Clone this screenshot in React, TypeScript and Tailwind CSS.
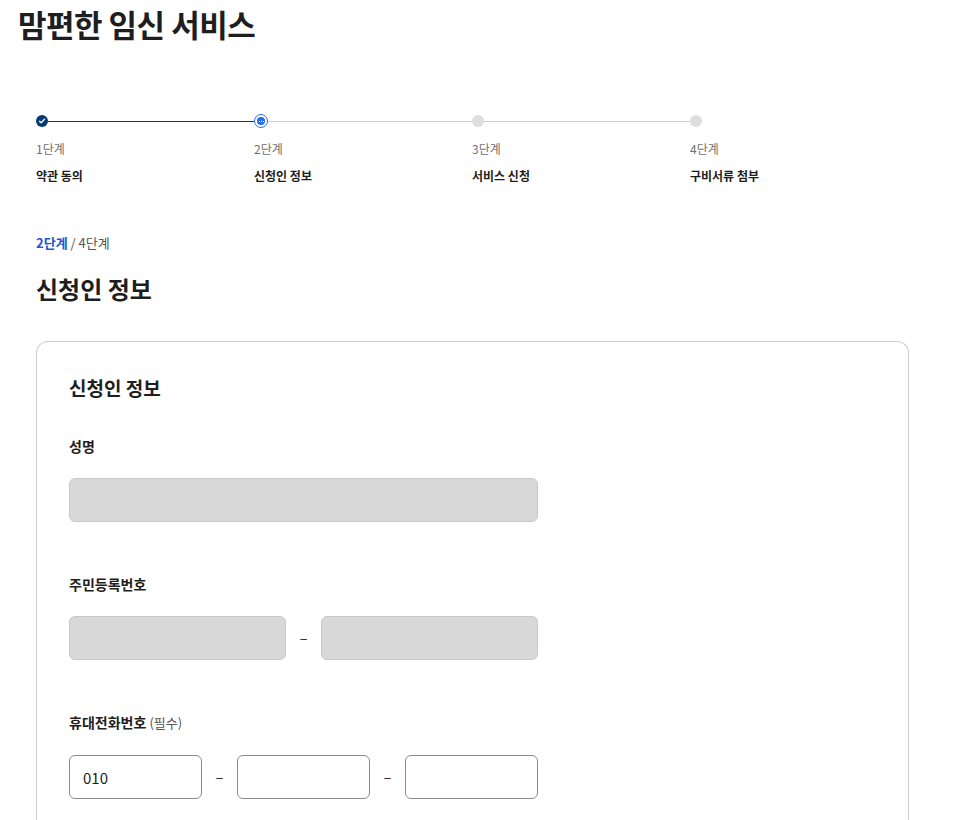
import React from "react";

interface Step {
  no: string;
  label: string;
  state: "done" | "current" | "todo";
}

const steps: Step[] = [
  { no: "1단계", label: "약관 동의", state: "done" },
  { no: "2단계", label: "신청인 정보", state: "current" },
  { no: "3단계", label: "서비스 신청", state: "todo" },
  { no: "4단계", label: "구비서류 첨부", state: "todo" },
];

const StepDot: React.FC<{ state: Step["state"] }> = ({ state }) => {
  if (state === "done") {
    return (
      <span className="flex h-[12px] w-[12px] shrink-0 items-center justify-center rounded-full bg-[#063a74]">
        <svg width="8" height="8" viewBox="0 0 8 8" fill="none">
          <path d="M1.5 4.2 3.2 5.8 6.5 2.3" stroke="white" strokeWidth="1.3" strokeLinecap="round" strokeLinejoin="round" />
        </svg>
      </span>
    );
  }
  if (state === "current") {
    return (
      <span className="flex h-[14px] w-[14px] shrink-0 items-center justify-center rounded-full border border-[#256ef4] bg-white">
        <span className="flex h-[8px] w-[8px] items-center justify-center gap-[1px] rounded-full bg-[#256ef4]">
          <span className="h-[1px] w-[1px] bg-white" />
          <span className="h-[1px] w-[1px] bg-white" />
          <span className="h-[1px] w-[1px] bg-white" />
        </span>
      </span>
    );
  }
  return <span className="h-[12px] w-[12px] shrink-0 rounded-full bg-[#dedede]" />;
};

const Dash = () => (
  <span className="flex w-[35px] shrink-0 items-center justify-center text-[15px] text-[#333]">–</span>
);

const boxGray = "h-[44px] rounded-[6px] border border-[#c8c8c8] bg-[#d8d8d8]";
const boxWhite =
  "h-[44px] w-[133px] rounded-[6px] border border-[#8c8c8c] bg-white px-[13px] text-[15px] text-[#1e1e1e] outline-none";

export default function App() {
  return (
    <div className="min-h-screen bg-white text-[#1e1e1e] [font-family:'Noto_Sans_CJK_KR','Noto_Sans',sans-serif]">
      <h1 className="pl-[18px] text-[31px] font-bold leading-[48px] tracking-[-0.5px]">맘편한 임신 서비스</h1>

      <div className="pl-[36px]">
        {/* stepper */}
        <ol className="mt-[66px] flex">
          {steps.map((s, i) => (
            <li key={s.no} className="w-[218px]">
              <div className="flex h-[14px] items-center">
                <StepDot state={s.state} />
                {i < steps.length - 1 && (
                  <span className={`h-px flex-1 ${i === 0 ? "bg-[#063a74]" : "bg-[#cfcfcf]"}`} />
                )}
              </div>
              <p className="mt-[12px] text-[12px] leading-[18px] text-[#707070]">{s.no}</p>
              <p className="mt-[9px] text-[12px] font-bold leading-[18px]">{s.label}</p>
            </li>
          ))}
        </ol>

        <p className="mt-[48px] text-[13px] leading-[20px] text-[#555]">
          <span className="font-bold text-[#2158d0]">2단계</span> / 4단계
        </p>
        <h2 className="mt-[19px] text-[24px] font-bold leading-[34px]">신청인 정보</h2>

        <section className="mt-[35px] w-[873px] rounded-t-[12px] border border-b-0 border-[#cdcdcd] px-8 pt-8 pb-[40px]">
          <h3 className="text-[19px] font-bold leading-[28px]">신청인 정보</h3>

          <label className="mt-[34px] block text-[14px] font-bold leading-[20px]">성명</label>
          <div className={`mt-[22px] w-[469px] ${boxGray}`} />

          <label className="mt-[52px] block text-[14px] font-bold leading-[20px]">주민등록번호</label>
          <div className="mt-[22px] flex w-[469px]">
            <div className={`w-[217px] ${boxGray}`} />
            <Dash />
            <div className={`w-[217px] ${boxGray}`} />
          </div>

          <label className="mt-[52px] block text-[14px] font-bold leading-[20px]">
            휴대전화번호 <span className="text-[13px] font-normal text-[#555]">(필수)</span>
          </label>
          <div className="mt-[22px] flex w-[469px]">
            <input className={boxWhite} defaultValue="010" />
            <Dash />
            <input className={boxWhite} />
            <Dash />
            <input className={boxWhite} />
          </div>
        </section>
      </div>
    </div>
  );
}
